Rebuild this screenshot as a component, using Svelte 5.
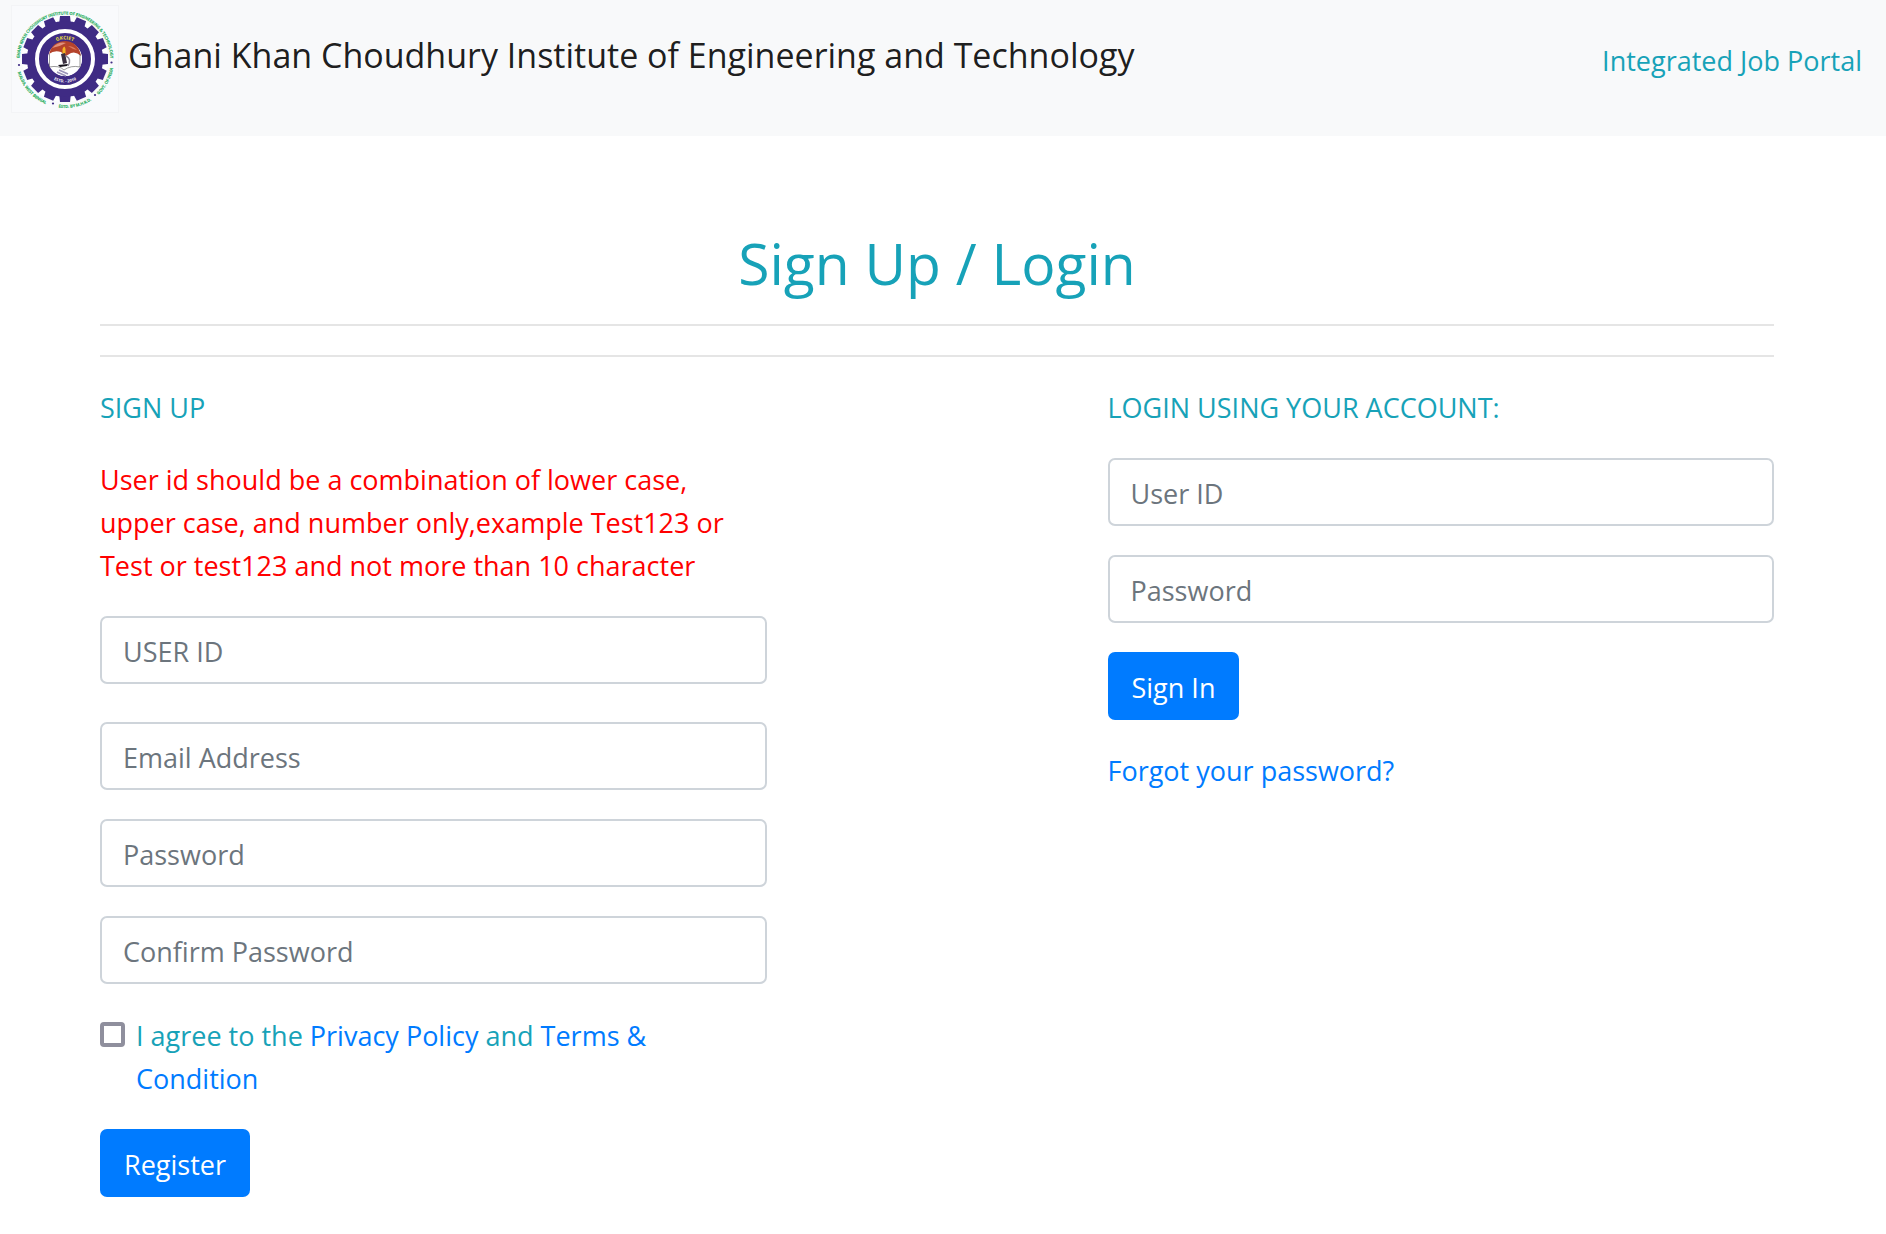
<script lang="ts">
	let signup = { userId: '', email: '', password: '', confirm: '', agree: false };
	let login = { userId: '', password: '' };

	// one tooth every 22.5 degrees
	const teeth = Array.from({ length: 16 }, (_, i) => i * 22.5);
</script>

<svelte:head>
	<title>Integrated Job Portal</title>
</svelte:head>

<nav class="navbar">
	<a class="brand" href="#home">
		<svg class="logo" viewBox="0 0 108 108" aria-hidden="true">
			<defs>
				<path id="ring-top" d="M8.500 55 a45.500 45.500 0 0 1 91 0" />
				<path id="ring-bottom" d="M5 54 a49 49 0 0 0 98 0" />
				<path id="inner-top" d="M34.500 54 a19.500 19.500 0 0 1 39 0" />
				<path id="inner-bottom" d="M30.500 54 a23.500 23.500 0 0 0 47 0" />
			</defs>
			<rect x="0.5" y="0.5" width="107" height="107" fill="#f9fafc" stroke="#f3f4f6" />
			<circle cx="54" cy="54" r="43" fill="#fff" />
			<!-- gear -->
			<g fill="#3f2b84">
				{#each teeth as angle}
					<path d="M48 20 L49 11 H59 L60 20 Z" transform="rotate({angle} 54 54)" />
				{/each}
			</g>
			<circle cx="54" cy="54" r="34" fill="none" stroke="#3f2b84" stroke-width="8" />
			<circle cx="54" cy="54" r="21.5" fill="none" stroke="#3f2b84" stroke-width="9" />
			<!-- emblem -->
			<circle cx="54" cy="54" r="17" fill="#fff" />
			<path d="M38 49 Q40 41 46 38 Q54 34 62 38 Q69 43 70 51 Q65 46 60 48 L55 51 L50 47 Q43 45 38 49 Z" fill="#b5432b" />
			<path d="M41 43 Q48 36 55 38 Q48 42 41 43 Z" fill="#e0917b" />
			<path d="M57 41 Q62 41 66 45 Q61 44 57 41 Z" fill="#d9785c" />
			<path d="M51.500 44 q2 -5 3 0 v5 h-3 Z" fill="#f5b323" />
			<path d="M38.500 49 V62 Q48 60 53 65 Q60 60 69 62 V49" fill="none" stroke="#555" stroke-width="0.6" />
			<path d="M50 49 L54 48 L56 58 L52 59 Z" fill="#3a3040" />
			<path d="M55 51 Q61 54 57 61" fill="none" stroke="#8d8796" stroke-width="1.5" />
			<path d="M47 60 L57 59 L56 61 L49 62 Z" fill="#17131c" />
			<path d="M46 67 L55 71 M48 65 L57 69" stroke="#9a93b8" stroke-width="1.6" />
			<text class="gold"><textPath href="#inner-top" startOffset="50%">GKCIET</textPath></text>
			<text class="estd"><textPath href="#inner-bottom" startOffset="50%">ESTD. - 2010</textPath></text>
			<g class="motto">
				<text><textPath href="#ring-top" startOffset="50%">GHANI KHAN CHOUDHURY INSTITUTE OF ENGINEERING &amp; TECHNOLOGY</textPath></text>
				<text><textPath href="#ring-bottom" startOffset="23%">MALDA, WEST BENGAL</textPath></text>
				<text><textPath href="#ring-bottom" startOffset="57%">ESTD. BY M.H.R.D.</textPath></text>
				<text><textPath href="#ring-bottom" startOffset="84%">GOVT. OF INDIA</textPath></text>
			</g>
			<g fill="#3f2b84">
				<circle cx="8" cy="60" r="1.1" />
				<circle cx="100.500" cy="57.500" r="1.1" />
				<circle cx="42" cy="98.500" r="1.1" />
				<circle cx="84" cy="90" r="1.1" />
			</g>
		</svg>
		<span>Ghani Khan Choudhury Institute of Engineering and Technology</span>
	</a>
	<a class="portal" href="#portal">Integrated Job Portal</a>
</nav>

<main>
	<div class="container">
		<h1>Sign Up / Login</h1>
		<hr />
		<hr />
		<div class="row">
			<form class="col" on:submit|preventDefault>
				<h2>SIGN UP</h2>
				<p class="hint">
					User id should be a combination of lower case, upper case, and number only,example Test123 or
					Test or test123 and not more than 10 character
				</p>
				<input class="form-control user-id" type="text" placeholder="USER ID" aria-label="USER ID" bind:value={signup.userId} />
				<input class="form-control" type="email" placeholder="Email Address" aria-label="Email Address" bind:value={signup.email} />
				<input class="form-control" type="password" placeholder="Password" aria-label="Password" bind:value={signup.password} />
				<input class="form-control" type="password" placeholder="Confirm Password" aria-label="Confirm Password" bind:value={signup.confirm} />
				<div class="form-check">
					<input id="agree" type="checkbox" bind:checked={signup.agree} />
					<label for="agree">
						I agree to the <a href="#privacy">Privacy Policy</a> and <a href="#terms">Terms &amp; Condition</a>
					</label>
				</div>
				<button class="btn" type="submit">Register</button>
			</form>

			<form class="col" on:submit|preventDefault>
				<h2>LOGIN USING YOUR ACCOUNT:</h2>
				<input class="form-control" type="text" placeholder="User ID" aria-label="User ID" bind:value={login.userId} />
				<input class="form-control" type="password" placeholder="Password" aria-label="Password" bind:value={login.password} />
				<button class="btn" type="submit">Sign In</button>
				<a href="#forgot">Forgot your password?</a>
			</form>
		</div>
	</div>
</main>

<style>
	:global(body) {
		background: #fff;
		color: #212529;
		font-family: 'Open Sans', 'Noto Sans', sans-serif;
		font-size: 27px;
		line-height: 43px;
	}

	a {
		color: #007bff;
		text-decoration: none;
	}

	/* top bar */
	.navbar {
		display: flex;
		justify-content: space-between;
		align-items: flex-start;
		min-height: 136px;
		padding: 5px 24px 0 11px;
		box-sizing: border-box;
		background: #f8f9fa;
	}

	.brand {
		display: flex;
		gap: 9px;
		color: rgba(0, 0, 0, 0.9);
		font-size: 34px;
	}

	.brand span {
		padding-top: 29px;
	}

	.logo {
		flex: none;
		width: 108px;
		height: 108px;
	}

	.logo text {
		font-family: 'Open Sans', sans-serif;
		font-weight: 700;
		text-anchor: middle;
	}

	.logo .motto text {
		font-size: 4px;
		font-weight: 600;
		fill: #27ae60;
		stroke: #27ae60;
		stroke-width: 0.2px;
	}

	.logo .gold {
		font-size: 5px;
		fill: #f2e33a;
	}

	.logo .estd {
		font-size: 4px;
		fill: #fff;
	}

	.portal {
		padding-top: 34px;
		color: #17a2b8;
	}

	/* page */
	main {
		padding: 91px 39px 36px 27px;
	}

	.container {
		max-width: 1674px;
		margin: 0 auto;
	}

	h1 {
		margin: 0 0 24px;
		color: #17a2b8;
		font-size: 57px;
		font-weight: 400;
		line-height: 73px;
		text-align: center;
	}

	hr {
		margin: 0 0 29px;
		border: 0;
		border-top: 2px solid #e5e5e5;
	}

	.row {
		display: flex;
		flex-wrap: wrap;
		justify-content: space-between;
	}

	.col {
		display: flex;
		flex-direction: column;
		align-items: flex-start;
		gap: 29px;
		width: calc(41.6667% - 31px);
		min-width: 400px;
	}

	h2 {
		margin: 0;
		color: #17a2b8;
		font-size: 27px;
		font-weight: 400;
	}

	.hint {
		margin: 0;
		color: #f00;
	}

	.form-control {
		width: 100%;
		height: 68px;
		padding: 2px 21px 0;
		box-sizing: border-box;
		border: 2px solid #ced4da;
		border-radius: 7px;
		background: #fff;
		color: #495057;
		font: inherit;
	}

	.form-control::placeholder {
		color: #6c757d;
		opacity: 1;
	}

	.user-id {
		margin-bottom: 9px;
	}

	.form-check {
		display: flex;
		gap: 11px;
		padding-top: 1px;
		color: #17a2b8;
	}

	.form-check input {
		flex: none;
		appearance: none;
		width: 25px;
		height: 25px;
		margin: 8px 0 0;
		border: 4px solid #8f8f9d;
		border-radius: 4px;
		background: #fff;
	}

	.form-check input:checked {
		border-color: #007bff;
		background: #007bff;
	}

	.btn {
		height: 68px;
		padding: 2px 24px 0;
		border: 0;
		border-radius: 7px;
		background: #007bff;
		color: #fff;
		font: inherit;
		cursor: pointer;
	}

	.btn:hover {
		background: #0069d9;
	}
</style>
